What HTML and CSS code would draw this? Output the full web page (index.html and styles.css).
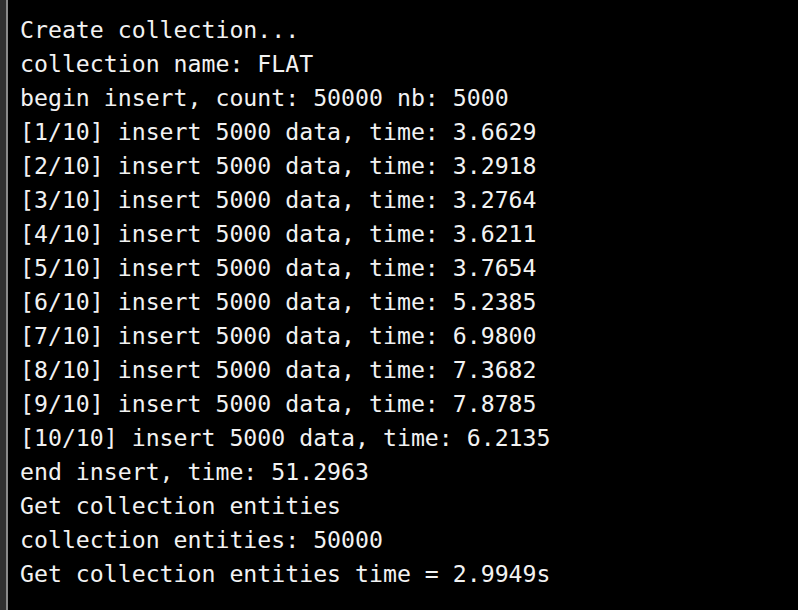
FILE: index.html
```html
<!DOCTYPE html>
<html>
<head>
<meta charset="utf-8">
<link rel="stylesheet" href="styles.css">
</head>
<body>
<div class="window">
  <div class="gutter"></div>
  <pre class="term">Create collection...
collection name: FLAT
begin insert, count: 50000 nb: 5000
[1/10] insert 5000 data, time: 3.6629
[2/10] insert 5000 data, time: 3.2918
[3/10] insert 5000 data, time: 3.2764
[4/10] insert 5000 data, time: 3.6211
[5/10] insert 5000 data, time: 3.7654
[6/10] insert 5000 data, time: 5.2385
[7/10] insert 5000 data, time: 6.9800
[8/10] insert 5000 data, time: 7.3682
[9/10] insert 5000 data, time: 7.8785
[10/10] insert 5000 data, time: 6.2135
end insert, time: 51.2963
Get collection entities
collection entities: 50000
Get collection entities time = 2.9949s</pre>
</div>
</body>
</html>
```
FILE: styles.css
```css
html, body {
  margin: 0;
  padding: 0;
  background: #000;
  height: 100%;
  overflow: hidden;
}
.window {
  display: flex;
  height: 610px;
  width: 798px;
}
.gutter {
  width: 6px;
  background: #303030;
  border-right: 2px solid #8a8a8a;
  flex: none;
}
.term {
  margin: 0;
  padding: 13px 0 0 12px;
  font-family: "DejaVu Sans Mono", monospace;
  font-size: 23.2px;
  line-height: 34px;
  color: #f2f2f2;
  white-space: pre;
}
```
